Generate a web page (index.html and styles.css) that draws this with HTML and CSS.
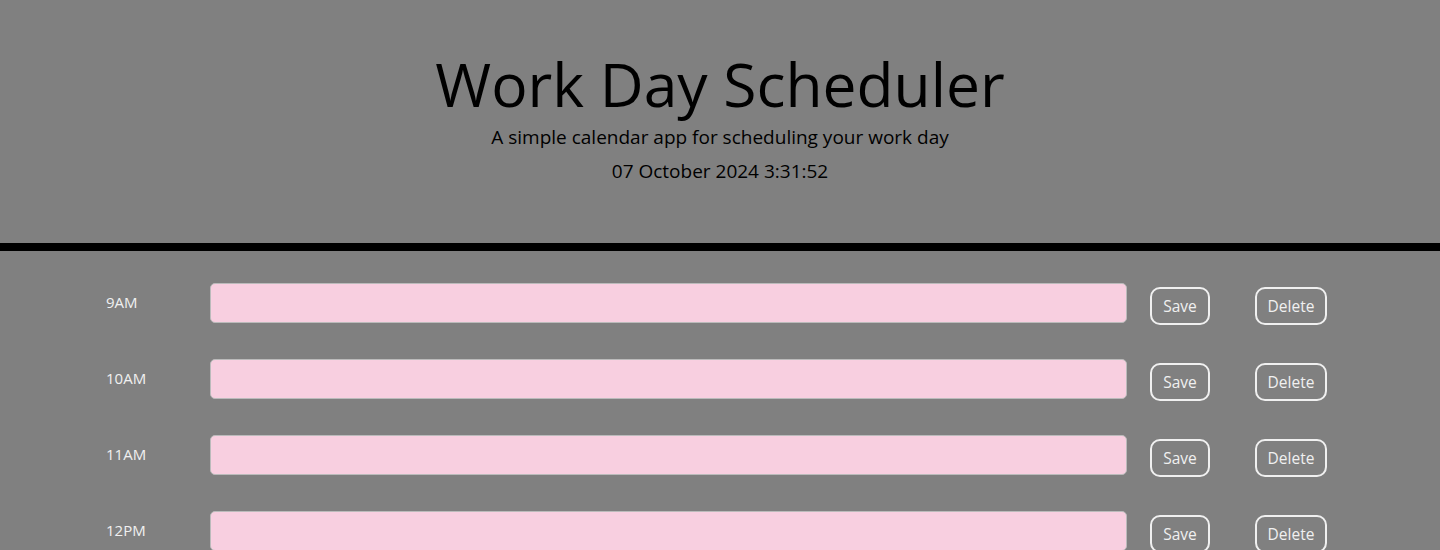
FILE: index.html
```html
<!DOCTYPE html>
<html>
<head>
<meta charset="utf-8">
<link rel="stylesheet" href="styles.css">
</head>
<body>
<header class="header">
  <h1 class="title">Work Day Scheduler</h1>
  <p class="lead">A simple calendar app for scheduling your work day</p>
  <p class="date">07 October 2024 3:31:52</p>
</header>
<main class="schedule">
  <div class="row">
    <div class="hour">9AM</div>
    <input class="task" type="text">
    <div class="actions"><button class="btn save">Save</button><button class="btn delete">Delete</button></div>
  </div>
  <div class="row">
    <div class="hour">10AM</div>
    <input class="task" type="text">
    <div class="actions"><button class="btn save">Save</button><button class="btn delete">Delete</button></div>
  </div>
  <div class="row">
    <div class="hour">11AM</div>
    <input class="task" type="text">
    <div class="actions"><button class="btn save">Save</button><button class="btn delete">Delete</button></div>
  </div>
  <div class="row">
    <div class="hour">12PM</div>
    <input class="task" type="text">
    <div class="actions"><button class="btn save">Save</button><button class="btn delete">Delete</button></div>
  </div>
</main>
</body>
</html>
```
FILE: styles.css
```css
html, body {
  margin: 0;
  padding: 0;
}
body {
  background: #808080;
  font-family: "Open Sans", "Liberation Sans", sans-serif;
  color: #000;
}
.header {
  height: 243px;
  border-bottom: 8px solid #000;
  text-align: center;
}
.title {
  margin: 0;
  padding-top: 46px;
  font-size: 60.5px;
  font-weight: 400;
  line-height: 76px;
}
.lead {
  margin: 0;
  padding-top: 2px;
  font-size: 19px;
  line-height: 26px;
}
.date {
  margin: 7px 0 0;
  font-size: 19px;
  line-height: 28px;
}
.schedule {
  padding-top: 32px;
  display: flex;
  flex-direction: column;
  gap: 36px;
}
.row {
  display: flex;
  align-items: center;
  height: 40px;
}
.hour {
  flex: none;
  width: 210px;
  padding-left: 106px;
  box-sizing: border-box;
  color: #f0f0f0;
  font-size: 15px;
  margin-top: -2px;
}
.task {
  flex: none;
  width: 917px;
  height: 40px;
  box-sizing: border-box;
  border: 1px solid #bbb;
  border-radius: 5px;
  background: #f8cfe0;
  margin: 0;
  padding: 0 10px;
}
.actions {
  display: flex;
  gap: 45px;
  margin-left: 23px;
  margin-top: 6px;
}
.btn {
  font-family: "Open Sans", "Liberation Sans", sans-serif;
  font-size: 15.5px;
  color: #f0f0f0;
  background: transparent;
  border: 2px solid #f0f0f0;
  border-radius: 10px;
  height: 38px;
  padding: 0;
  box-sizing: border-box;
}
.save { width: 60px; }
.delete { width: 72px; }
```
